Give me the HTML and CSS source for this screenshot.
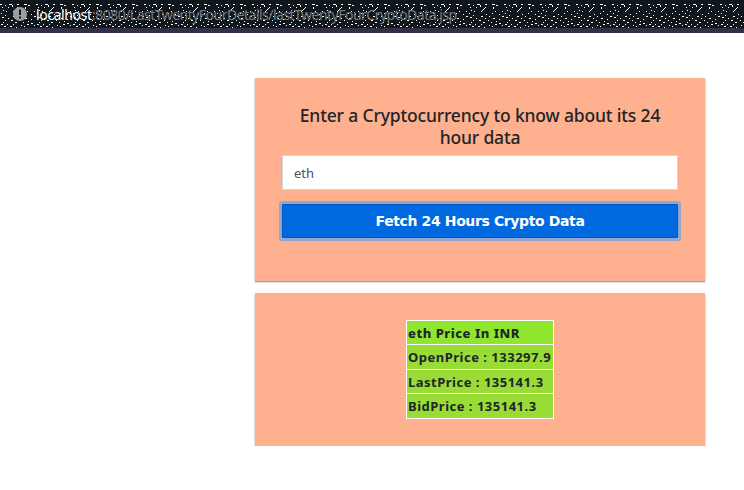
FILE: index.html
```html
<!DOCTYPE html>
<html lang="en">
<head>
<meta charset="utf-8">
<title>Crypto Data</title>
<link rel="stylesheet" href="styles.css">
</head>
<body>
<header class="address-bar">
  <svg class="grain" width="744" height="24" shape-rendering="crispEdges" aria-hidden="true">
    <defs>
      <pattern id="specks" width="36" height="24" patternUnits="userSpaceOnUse">
        <path fill="#fff" d="M0 0h2v1h-2zM5 1h1v1h-1zM9 0h3v1h-3zM12 1h1v2h-1zM17 0h2v1h-2zM24 0h3v1h-3zM28 1h2v1h-2zM2 3h1v1h-1zM8 3h1v1h-1zM17 3h1v1h-1zM16 4h1v1h-1zM15 5h1v1h-1zM14 6h1v1h-1zM13 7h1v1h-1zM25 3h1v2h-1zM3 6h1v1h-1zM6 7h1v1h-1zM27 7h1v1h-1zM34 7h1v1h-1zM1 9h1v1h-1zM18 10h1v1h-1zM24 9h1v1h-1zM31 10h1v1h-1zM5 11h1v1h-1zM13 12h2v1h-2zM21 12h1v1h-1zM34 12h2v1h-2zM2 13h2v1h-2zM8 14h1v1h-1zM17 14h1v1h-1zM25 14h2v1h-2zM31 15h1v1h-1zM5 16h1v1h-1zM11 16h2v1h-2zM20 16h1v1h-1zM28 17h1v1h-1zM3 18h1v1h-1zM15 18h2v1h-2zM23 18h1v1h-1zM31 19h2v1h-2zM1 20h2v1h-2zM7 20h1v1h-1zM13 20h1v1h-1zM21 21h1v1h-1zM27 20h2v1h-2zM4 22h2v1h-2zM10 22h2v1h-2zM16 23h1v1h-1zM24 22h1v1h-1zM34 21h1v1h-1z"/>
      </pattern>
    </defs>
    <rect width="744" height="24" fill="url(#specks)"/>
  </svg>
  <svg class="info" width="14" height="14" viewBox="0 0 14 14" aria-hidden="true">
    <circle cx="7" cy="7" r="7" fill="#9b9ea1"/>
    <path d="M6 2.5h2v5.5h-2zM6 9.5h2v2h-2z" fill="#111719"/>
  </svg>
  <div class="url"><span class="host">localhost</span><span class="path">:8080/LastTwentyFourDetails/lastTwentyFourCryptoData.jsp</span></div>
</header>
<main>
  <form class="card search">
    <h1><span class="line">Enter a Cryptocurrency to know about its 24</span><span class="line">hour data</span></h1>
    <input type="text" value="eth" aria-label="Cryptocurrency">
    <button type="button">Fetch 24 Hours Crypto Data</button>
  </form>
  <section class="card result">
    <div class="prices">
      <div class="row title">eth Price In INR</div>
      <div class="row">OpenPrice : 133297.9</div>
      <div class="row">LastPrice : 135141.3</div>
      <div class="row">BidPrice : 135141.3</div>
    </div>
  </section>
</main>
</body>
</html>
```
FILE: styles.css
```css
* { box-sizing: border-box; }
body {
  margin: 0;
  background: #fff;
  font-family: "Noto Sans", "Open Sans", sans-serif;
  color: #212529;
}
.address-bar {
  position: relative;
  height: 33px;
  padding: 0 0 0 13px;
  border-bottom: 5px solid #302f43;
  background: #10171c;
  display: flex;
  align-items: center;
  gap: 9px;
}
.grain { position: absolute; left: 0; top: 4px; }
.info { position: relative; }
.url {
  position: relative;
  top: 1px;
  display: flex;
  font-size: 14px;
  line-height: 20px;
  white-space: nowrap;
}
.host { color: #fff; width: 56px; letter-spacing: -0.4px; }
.path { color: #777b80; letter-spacing: -0.52px; }
main {
  width: 450px;
  margin: 45px 0 0 255px;
  display: flex;
  flex-direction: column;
  gap: 12px;
}
.card {
  background: #ffb08e;
  box-shadow: 0 1px 1px #8fa3b4, 0 1px 2px rgba(80, 100, 160, .3);
}
.search {
  height: 203px;
  padding: 26px 27px 0;
  display: flex;
  flex-direction: column;
}
h1 {
  margin: 0;
  font-size: 17.5px;
  line-height: 22px;
  font-weight: 500;
  letter-spacing: -0.16px;
  text-align: center;
}
.line { display: block; white-space: nowrap; }
input {
  height: 35px;
  margin-top: 7px;
  padding: 1px 11px 0;
  border: 1px solid #ced4da;
  background: #fff;
  color: #495057;
  font: 13px "Noto Sans", sans-serif;
}
button {
  height: 34px;
  margin-top: 14px;
  padding: 0;
  border: 1px solid #0055c4;
  border-radius: 1px;
  background: #0069e0;
  box-shadow: 0 0 0 3px #91a7cf;
  color: #fff;
  font: bold 14px "DejaVu Sans", sans-serif;
  letter-spacing: -0.38px;
}
.result {
  height: 153px;
  padding-top: 27px;
  display: flex;
  justify-content: center;
  align-items: flex-start;
}
.prices {
  width: 148px;
  height: 99px;
  padding: 1px;
  background: #fff;
  display: grid;
  grid-template-rows: 23px 24px 23px 24px;
  gap: 1px;
}
.row {
  padding-left: 1px;
  background: #98dc35;
  font-size: 13px;
  font-weight: 700;
  line-height: 24px;
  letter-spacing: 0.5px;
  white-space: nowrap;
}
.title { background: #90e52e; font-weight: 800; }
```
